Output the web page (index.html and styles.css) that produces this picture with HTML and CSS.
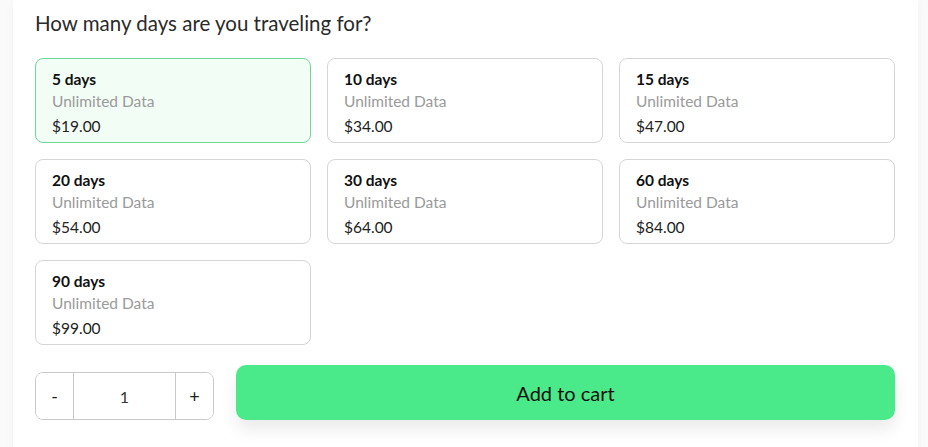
FILE: index.html
```html
<!DOCTYPE html>
<html lang="en">
<head>
    <meta charset="UTF-8">
    <meta name="viewport" content="width=device-width, initial-scale=1.0">
    <title>Choose plan</title>
    <link rel="stylesheet" href="styles.css">
</head>
<body>
    <div class="panel">
        <h2 class="question">How many days are you traveling for?</h2>

        <!-- Plans -->
        <div class="plan-grid">
            <div class="plan selected">
                <div class="plan-days">5 days</div>
                <div class="plan-data">Unlimited Data</div>
                <div class="plan-price">$19.00</div>
            </div>
            <div class="plan">
                <div class="plan-days">10 days</div>
                <div class="plan-data">Unlimited Data</div>
                <div class="plan-price">$34.00</div>
            </div>
            <div class="plan">
                <div class="plan-days">15 days</div>
                <div class="plan-data">Unlimited Data</div>
                <div class="plan-price">$47.00</div>
            </div>
            <div class="plan">
                <div class="plan-days">20 days</div>
                <div class="plan-data">Unlimited Data</div>
                <div class="plan-price">$54.00</div>
            </div>
            <div class="plan">
                <div class="plan-days">30 days</div>
                <div class="plan-data">Unlimited Data</div>
                <div class="plan-price">$64.00</div>
            </div>
            <div class="plan">
                <div class="plan-days">60 days</div>
                <div class="plan-data">Unlimited Data</div>
                <div class="plan-price">$84.00</div>
            </div>
            <div class="plan">
                <div class="plan-days">90 days</div>
                <div class="plan-data">Unlimited Data</div>
                <div class="plan-price">$99.00</div>
            </div>
        </div>

        <!-- Quantity and cart -->
        <div class="cart-row">
            <div class="qty">
                <button class="qty-btn">-</button>
                <input class="qty-input" type="text" value="1">
                <button class="qty-btn">+</button>
            </div>
            <button class="add-btn">Add to cart</button>
        </div>
    </div>
</body>
</html>
```

FILE: styles.css
```css
body {
    margin: 0;
    background-color: #fafafa;
    font-family: 'Lato', sans-serif;
    color: #111;
}

.panel {
    margin: 0 10px 0 13px;
    padding: 10px 23px 40px 22px;
    background-color: #ffffff;
    box-shadow: 0px 2px 10px rgba(0, 0, 0, 0.04);
}

.question {
    margin: 0 0 22px 0;
    font-size: 20.5px;
    line-height: 26px;
    font-weight: 400;
    color: #2a2a2a;
}

.plan-grid {
    display: grid;
    grid-template-columns: repeat(3, 1fr);
    grid-auto-rows: 85px;
    gap: 16px;
}

.plan {
    box-sizing: border-box;
    padding: 9px 16px;
    border: 1px solid #d6d6d6;
    border-radius: 8px;
    background-color: #fff;
}
.plan.selected {
    border-color: #6fd79a;
    background-color: #f2fdf6;
}

.plan-days {
    font-size: 15.5px;
    line-height: 22px;
    font-weight: 700;
    color: #111;
}
.plan-data {
    font-size: 15.5px;
    line-height: 22px;
    color: #9a9a9a;
}
.plan-price {
    margin-top: 3px;
    font-size: 15.5px;
    line-height: 22px;
    color: #222;
}

.cart-row {
    display: flex;
    align-items: flex-end;
    gap: 22px;
    margin-top: 20px;
}

.qty {
    display: flex;
    width: 179px;
    height: 48px;
    box-sizing: border-box;
    border: 1px solid #c9c9c9;
    border-radius: 8px;
    overflow: hidden;
    flex-shrink: 0;
}
.qty-btn {
    width: 37px;
    border: none;
    background: #fff;
    font-family: 'Lato', sans-serif;
    font-size: 18px;
    color: #222;
    padding: 0;
}
.qty-input {
    width: 0;
    flex: 1;
    border: none;
    border-left: 1px solid #c9c9c9;
    border-right: 1px solid #c9c9c9;
    text-align: center;
    font-family: 'Lato', sans-serif;
    font-size: 16px;
    color: #333;
    padding: 0;
}

.add-btn {
    flex: 1;
    height: 55px;
    border: none;
    border-radius: 10px;
    background-color: #4aea8a;
    color: #111;
    font-family: 'Lato', sans-serif;
    font-size: 20px;
    box-shadow: 0px 10px 16px rgba(0, 0, 0, 0.08);
}
```
